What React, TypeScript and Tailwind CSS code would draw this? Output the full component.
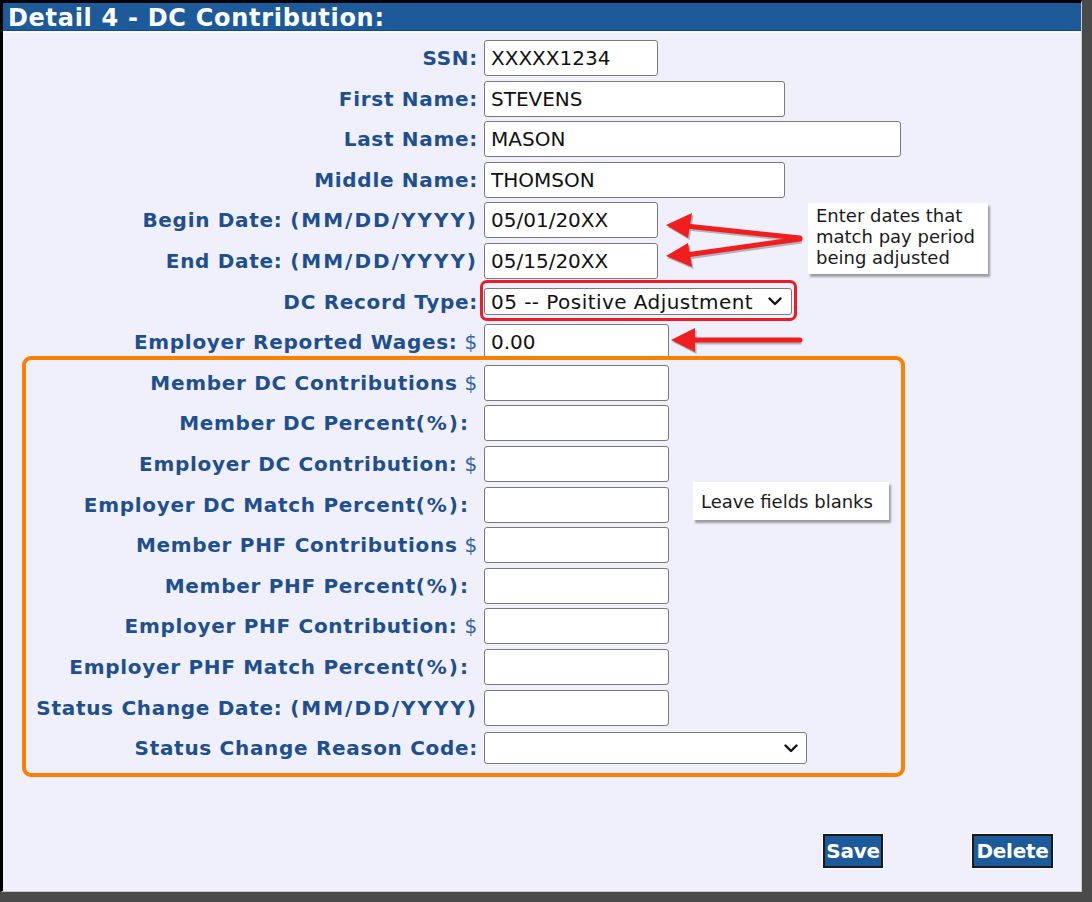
import React from "react";

type Row = {
  label: string;
  paren?: string;
  dollar?: boolean;
  pad?: boolean;
  w: string;
  value?: string;
  select?: "record" | "reason";
};

const rows: Row[] = [
  { label: "SSN:", w: "w-[174px]", value: "XXXXX1234" },
  { label: "First Name:", w: "w-[301px]", value: "STEVENS" },
  { label: "Last Name:", w: "w-[417px]", value: "MASON" },
  { label: "Middle Name:", w: "w-[301px]", value: "THOMSON" },
  { label: "Begin Date: ", paren: "(MM/DD/YYYY)", w: "w-[174px]", value: "05/01/20XX" },
  { label: "End Date: ", paren: "(MM/DD/YYYY)", w: "w-[174px]", value: "05/15/20XX" },
  { label: "DC Record Type:", w: "w-[308px]", value: "05 -- Positive Adjustment", select: "record" },
  { label: "Employer Reported Wages:", dollar: true, w: "w-[185px]", value: "0.00" },
  { label: "Member DC Contributions", dollar: true, w: "w-[185px]" },
  { label: "Member DC Percent", paren: "(%):", pad: true, w: "w-[185px]" },
  { label: "Employer DC Contribution:", dollar: true, w: "w-[185px]" },
  { label: "Employer DC Match Percent", paren: "(%):", pad: true, w: "w-[185px]" },
  { label: "Member PHF Contributions", dollar: true, w: "w-[185px]" },
  { label: "Member PHF Percent", paren: "(%):", pad: true, w: "w-[185px]" },
  { label: "Employer PHF Contribution:", dollar: true, w: "w-[185px]" },
  { label: "Employer PHF Match Percent", paren: "(%):", pad: true, w: "w-[185px]" },
  { label: "Status Change Date: ", paren: "(MM/DD/YYYY)", w: "w-[185px]" },
  { label: "Status Change Reason Code:", w: "w-[323px]", select: "reason" },
];

function Chevron() {
  return (
    <svg width="14" height="9" viewBox="0 0 14 9" className="shrink-0">
      <path d="M1.5 1.5 L7 7 L12.5 1.5" fill="none" stroke="#111" strokeWidth="2.4" strokeLinecap="round" strokeLinejoin="round" />
    </svg>
  );
}

function Field({ r }: { r: Row }) {
  if (r.select === "record") {
    return (
      <div className={`${r.w} h-[27px] bg-white border border-[#7a7a7a] rounded-[3px] flex items-center justify-between pl-[6px] pr-[9px] text-[20px] tracking-[0.45px] text-[#111] leading-none`}>
        <span>{r.value}</span>
        <Chevron />
      </div>
    );
  }
  if (r.select === "reason") {
    return (
      <div className={`${r.w} h-[32px] bg-white border border-[#7a7a7a] rounded-[3px] flex items-center justify-end pr-[8px]`}>
        <Chevron />
      </div>
    );
  }
  return (
    <input
      readOnly
      value={r.value ?? ""}
      className={`${r.w} h-[36px] bg-white border border-[#7a7a7a] rounded-[3px] pl-[6px] text-[20px] text-[#111] outline-none font-['DejaVu_Sans',sans-serif]`}
    />
  );
}

export default function App() {
  return (
    <div className="relative w-[1092px] h-[902px] bg-[#4a4a4a] overflow-hidden font-['DejaVu_Sans',sans-serif]">
      <div className="w-[1082px] h-[892px] border-t-[3px] border-l-[3px] border-r border-b border-black border-r-[#c9c9c9] border-b-[#c9c9c9] bg-[#f0f0fc] flex flex-col">
        <div className="h-[28px] bg-[#1d5a99] pl-[5px] pt-[2px] text-white font-bold text-[24px] leading-[26px] tracking-[0.7px] border-b border-[#15467c]">
          Detail 4 - DC Contribution:
        </div>
        <div className="h-[2px] bg-[#f8f8ff]" />
        <div className="flex flex-col gap-[4.6px] pt-[7px]">
          {rows.map((r, i) => (
            <div key={i} className="flex items-center h-[36px]">
              <div className={`w-[475px] text-right text-[20px] leading-none font-bold tracking-[0.7px] text-[#1e4f8e] whitespace-pre ${r.pad ? "pr-[8px]" : ""}`}>
                {r.label}
                {r.paren && <span className="tracking-[2px]">{r.paren}</span>}
                {r.dollar && <span className="font-normal text-[#2f62a6]"> $</span>}
              </div>
              <div className="ml-[6px] flex items-center">
                <Field r={r} />
              </div>
            </div>
          ))}
        </div>
        <div className="flex justify-end gap-[89px] pr-[28px] mt-[68px]">
          <button className="h-[34px] w-[60px] bg-[#1d5a99] border-2 border-[#1a1a1a] outline outline-1 outline-white text-white font-bold text-[20px] leading-none flex items-center justify-center tracking-[-0.3px]">
            Save
          </button>
          <button className="h-[34px] w-[81px] bg-[#1d5a99] border-2 border-[#1a1a1a] outline outline-1 outline-white text-white font-bold text-[20px] leading-none flex items-center justify-center tracking-[-0.3px]">
            Delete
          </button>
        </div>
      </div>

      {/* Annotation overlays */}
      <div className="absolute left-[22px] top-[356px] w-[883px] h-[421px] border-4 border-[#ff7f00] rounded-[9px] pointer-events-none" />
      <div className="absolute left-[480px] top-[280px] w-[317px] h-[41px] border-[3px] border-[#ec1c24] rounded-[7px] pointer-events-none" />

      <div className="absolute left-[808px] top-[203px] w-[180px] h-[71px] bg-white shadow-[2px_3px_2px_rgba(0,0,0,0.35)] pl-[8px] pt-[2px] text-[18px] leading-[21px] text-[#1a1a1a]">
        Enter dates that
        <br />
        match pay period
        <br />
        being adjusted
      </div>
      <div className="absolute left-[693px] top-[482px] w-[196px] h-[38px] bg-white shadow-[2px_3px_2px_rgba(0,0,0,0.35)] pl-[8px] flex items-center text-[18px] text-[#1a1a1a]">
        Leave fields blanks
      </div>

      <svg className="absolute left-0 top-0 pointer-events-none" width="1092" height="902">
        <g transform="translate(1.5,2)" opacity="0.25">
          <line x1="800" y1="238" x2="686" y2="226" stroke="#000" strokeWidth="5" />
          <line x1="800" y1="239" x2="686" y2="255" stroke="#000" strokeWidth="5" />
          <line x1="800" y1="340" x2="692" y2="340" stroke="#000" strokeWidth="5" />
          <polygon points="666,225 692,213 688,238" fill="#000" />
          <polygon points="666,256 688,243 692,267" fill="#000" />
          <polygon points="671,340 695,328 695,352" fill="#000" />
        </g>
        <line x1="800" y1="238" x2="686" y2="226" stroke="#f01e1e" strokeWidth="5" strokeLinecap="round" />
        <line x1="800" y1="239" x2="686" y2="255" stroke="#f01e1e" strokeWidth="5" strokeLinecap="round" />
        <line x1="800" y1="340" x2="692" y2="340" stroke="#f01e1e" strokeWidth="5" strokeLinecap="round" />
        <polygon points="666,225 692,213 688,238" fill="#f01e1e" />
        <polygon points="666,256 688,243 692,267" fill="#f01e1e" />
        <polygon points="671,340 695,328 695,352" fill="#f01e1e" />
      </svg>
    </div>
  );
}
